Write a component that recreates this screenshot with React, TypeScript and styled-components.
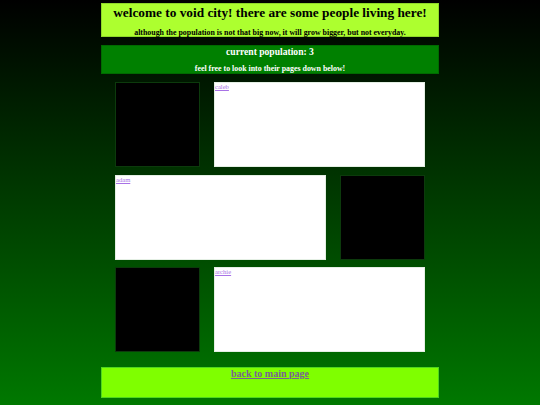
import styled, { createGlobalStyle } from "styled-components";

const GlobalStyle = createGlobalStyle`
  html, body {
    margin: 0;
    padding: 0;
  }
  body {
    min-height: 405px;
    background: linear-gradient(to bottom, #000000 0%, #007800 100%);
    font-family: "Liberation Serif", "Times New Roman", serif;
  }
`;

const Page = styled.div`
  width: 338px;
  margin: 0 auto;
  padding-top: 3px;
  display: flex;
  flex-direction: column;
  gap: 8px;
`;

const Banner = styled.header`
  box-sizing: border-box;
  height: 34px;
  background: #adff2f;
  border: 1px solid #8fd82a;
  display: flex;
  flex-direction: column;
  align-items: center;
`;

const Title = styled.h1`
  margin: 1px 0 0;
  font-size: 13.3px;
  line-height: 16px;
  font-weight: bold;
  color: #000;
  white-space: nowrap;
`;

const Note = styled.p<{ $light?: boolean }>`
  margin: 0;
  font-size: 7.9px;
  line-height: 8px;
  font-weight: bold;
  color: ${(p) => (p.$light ? "#ffffff" : "#000000")};
  white-space: nowrap;
`;

const BannerNote = styled(Note)`
  margin-top: 8px;
`;

const Census = styled.section`
  box-sizing: border-box;
  height: 29px;
  background: #008000;
  border: 1px solid #006a00;
  display: flex;
  flex-direction: column;
  align-items: center;
  justify-content: space-between;
`;

const CensusTitle = styled.h2`
  margin: 0;
  font-size: 9.6px;
  line-height: 12px;
  font-weight: bold;
  color: #fff;
`;

const Gallery = styled.main`
  padding: 0 14px;
  display: flex;
  flex-direction: column;
  gap: 7.5px;
`;

const Row = styled.div<{ $flip?: boolean }>`
  display: flex;
  flex-direction: ${(p) => (p.$flip ? "row-reverse" : "row")};
  justify-content: space-between;
  height: 85px;
`;

const Portrait = styled.div`
  box-sizing: border-box;
  width: 85px;
  height: 85px;
  background: #000;
  border: 1px solid #0c3a0c;
`;

const Card = styled.div`
  box-sizing: border-box;
  width: 211px;
  height: 85px;
  background: #fff;
  border: 1px solid #e4efe4;
`;

const NameLink = styled.a`
  display: block;
  font-size: 6.6px;
  line-height: 8px;
  color: #a872e6;
  text-decoration: underline;
`;

const Footer = styled.footer`
  box-sizing: border-box;
  margin-top: 7px;
  height: 31px;
  background: #7fff00;
  border: 1px solid #4fd61e;
  display: flex;
  justify-content: center;
`;

const BackLink = styled.a`
  font-size: 10px;
  line-height: 12px;
  font-weight: bold;
  color: #7a5f95;
  text-decoration: underline;
`;

const people = ["caleb", "adam", "archie"];

export default function App() {
  return (
    <>
      <GlobalStyle />
      <Page>
        <Banner>
          <Title>welcome to void city! there are some people living here!</Title>
          <BannerNote>
            although the population is not that big now, it will grow bigger, but not everyday.
          </BannerNote>
        </Banner>
        <Census>
          <CensusTitle>current population: {people.length}</CensusTitle>
          <Note $light>feel free to look into their pages down below!</Note>
        </Census>
        <Gallery>
          {people.map((name, i) => (
            <Row key={name} $flip={i % 2 === 1}>
              <Portrait />
              <Card>
                <NameLink href="#">{name}</NameLink>
              </Card>
            </Row>
          ))}
        </Gallery>
        <Footer>
          <BackLink href="#">back to main page</BackLink>
        </Footer>
      </Page>
    </>
  );
}
